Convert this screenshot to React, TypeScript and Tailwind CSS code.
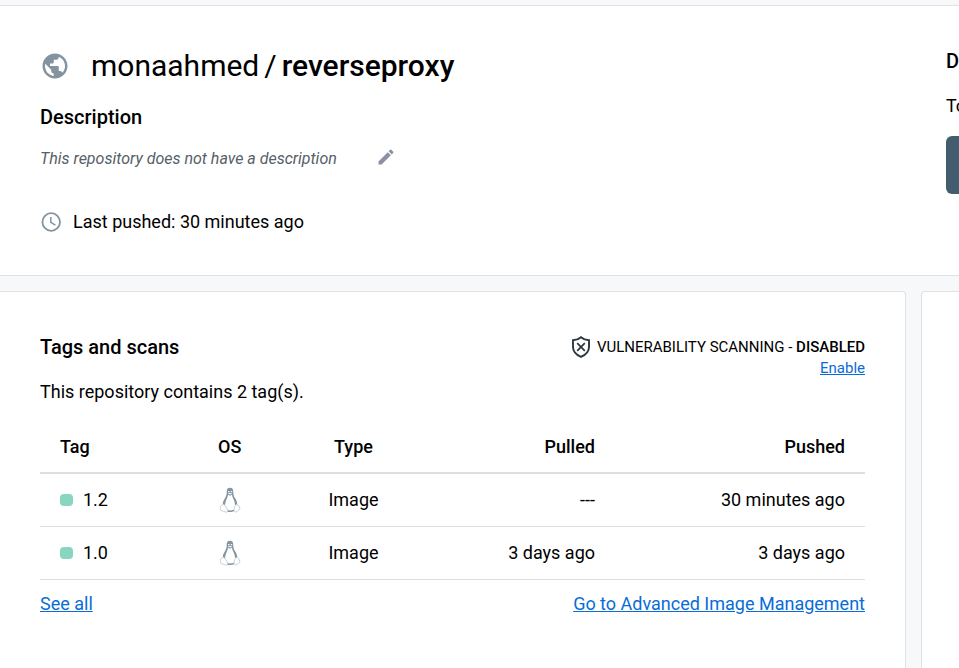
import React from "react";
import { MdPublic, MdEdit } from "react-icons/md";

const tags = [
  { name: "1.2", type: "Image", pulled: "---", pushed: "30 minutes ago" },
  { name: "1.0", type: "Image", pulled: "3 days ago", pushed: "3 days ago" },
];

function ClockIcon() {
  return (
    <svg width="21" height="20" viewBox="0 0 21 20" fill="none" stroke="#8393a0" aria-hidden="true">
      <circle cx="11.200" cy="10" r="8.8" strokeWidth="1.8" />
      <path d="M10.800 5v5.400l4.600 2.800" strokeWidth="1.5" />
    </svg>
  );
}

function ShieldIcon() {
  return (
    <svg width="20" height="22" viewBox="0 0 20 22" fill="none" stroke="#2b363d" aria-hidden="true">
      <path d="M10 1.2C8 3 5 4 2 4.2V11c0 4.600 3.200 7.800 8 9.900 4.800-2.100 8-5.300 8-9.900V4.200C15 4 12 3 10 1.200Z" strokeWidth="1.9" />
      <path d="M6.200 7.200l7.600 7.600M13.800 7.200l-7.600 7.600" strokeWidth="1.7" />
    </svg>
  );
}

function LinuxIcon() {
  return (
    <svg className="inline-block" width="22" height="26" viewBox="0 0 22 26" role="img" aria-label="Linux">
      <path d="M11 .8C8.600.8 7.600 2.400 7.700 4.700c.1 2.500-.4 3.900-1.500 6-1.300 2.200-2.500 4.400-2.500 6.900L6 18.500c.2-3.500 1.300-5.700 2.400-8.300L9.100 7.700 11 8.800l1.900-1.100.7 2.500c1.300 2.600 2.400 4.700 2.400 7.800l2.300-.3c0-2.600-1.100-4.900-2.500-7-1.200-2-1.500-3.300-1.500-5.800C14.300 2.300 13.300.8 11 .8Z" fill="#8595a0" />
      <path d="M9 4.600h1.500M11.700 4.600h1.500M9.400 6.600h3.200" stroke="#f1f4f6" strokeWidth="1.300" />
      <path d="M4.300 17.200c-.6 1.300-3 1.200-3 2.300 0 .8.500 1.500.2 3.500 0 1 3.100.8 5 2 1.500.6 2.500-.4 2.300-1.500-.4-1.500-2.700-5.800-4.500-6.300ZM17.500 17.600c-1.400.1-2.200 3.200-2.500 5.400-.1 2.300 1.900 2.700 3.100 1.300 1.100-1.200 2.900-1.500 2.900-2.500-.8-1.100-.7-2.700-1.300-3.400-.4-.5-1.200-.9-2.200-.8Z" fill="#fff" stroke="#c3ccd2" strokeWidth=".9" />
      <path d="M8.700 23.700c2 .9 4 .9 6.100-.3" fill="none" stroke="#8595a0" strokeWidth="1.500" />
    </svg>
  );
}

export default function App() {
  const link = "text-[#086dd7] underline";
  return (
    <div className="min-h-screen flex flex-col overflow-x-hidden bg-[#f7f8fa] pt-[5px] text-lg leading-6 text-black font-[Roboto,sans-serif]">
      <header className="flex justify-between border-y border-[#e1e2e6] bg-white pl-10 pb-[41px] pt-10">
        <section>
          <h1 className="flex h-10 items-center text-[30px] leading-10 whitespace-nowrap">
            <MdPublic className="mr-[21px] text-[#8393a0]" size={30} />
            <span className="flex gap-[5px]">
              <span>monaahmed</span>
              <span>/</span>
              <strong className="font-medium">reverseproxy</strong>
            </span>
          </h1>
          <h2 className="mt-[19px] text-xl leading-6 font-medium">Description</h2>
          <div className="mt-4 flex h-6 items-center gap-[39px]">
            <p className="pt-1 text-base italic text-[#556069]">This repository does not have a description</p>
            <button aria-label="Edit description" className="text-[#8b90a7]"><MdEdit size={20} /></button>
          </div>
          <p className="mt-[41px] flex items-center gap-3"><ClockIcon />Last pushed: 30 minutes ago</p>
        </section>
        <aside className="w-[13px] overflow-hidden whitespace-nowrap pt-[3px]">
          <h2 className="text-xl leading-6 font-medium">D</h2>
          <p className="mt-[21px]">To</p>
          <div className="mt-[18px] h-[58px] rounded-l-md bg-[#445d6e]" />
        </aside>
      </header>

      <main className="mt-[15px] flex flex-1 gap-[15px]">
        <section className="flex-1 rounded-tr-sm border-t border-r border-[#e1e2e6] bg-white pr-10 pl-10 pt-[43px]">
          <div className="flex justify-between">
            <div>
              <h2 className="text-xl leading-6 font-medium">Tags and scans</h2>
              <p className="mt-[21px]">This repository contains 2 tag(s).</p>
            </div>
            <div className="pt-px text-right text-[15px] leading-[21px]">
              <p className="flex items-center gap-[6px]">
                <ShieldIcon />
                <span>VULNERABILITY SCANNING - <strong className="font-medium">DISABLED</strong></span>
              </p>
              <a href="#enable" className={link}>Enable</a>
            </div>
          </div>
          <table className="mt-[17px] w-full table-fixed border-collapse">
            <colgroup>
              <col className="w-[17%]" />
              <col className="w-[12%]" />
              <col className="w-[18%]" />
              <col />
              <col className="w-[250px]" />
            </colgroup>
            <thead>
              <tr className="h-[52px] border-b-2 border-[#dcdee0]">
                <th className="pl-5 text-left font-medium">Tag</th>
                <th className="text-center font-medium">OS</th>
                <th className="text-center font-medium">Type</th>
                <th className="pr-5 text-right font-medium">Pulled</th>
                <th className="pr-5 text-right font-medium">Pushed</th>
              </tr>
            </thead>
            <tbody>
              {tags.map((t) => (
                <tr key={t.name} className="h-[53px] border-b border-[#dcdee0]">
                  <td className="pl-5">
                    <span className="flex items-center gap-[10px]">
                      <span className="h-3 w-[13px] rounded bg-[#88d5c0]" />
                      {t.name}
                    </span>
                  </td>
                  <td className="text-center leading-none"><LinuxIcon /></td>
                  <td className="text-center">{t.type}</td>
                  <td className="pr-5 text-right">{t.pulled}</td>
                  <td className="pr-5 text-right">{t.pushed}</td>
                </tr>
              ))}
            </tbody>
          </table>
          <nav aria-label="Tags" className="mt-3 flex justify-between">
            <a href="#tags" className={link}>See all</a>
            <a href="#management" className={link}>Go to Advanced Image Management</a>
          </nav>
        </section>
        <aside className="w-[38px] rounded-tl-sm border-t border-l border-[#e1e2e6] bg-white" />
      </main>
    </div>
  );
}
